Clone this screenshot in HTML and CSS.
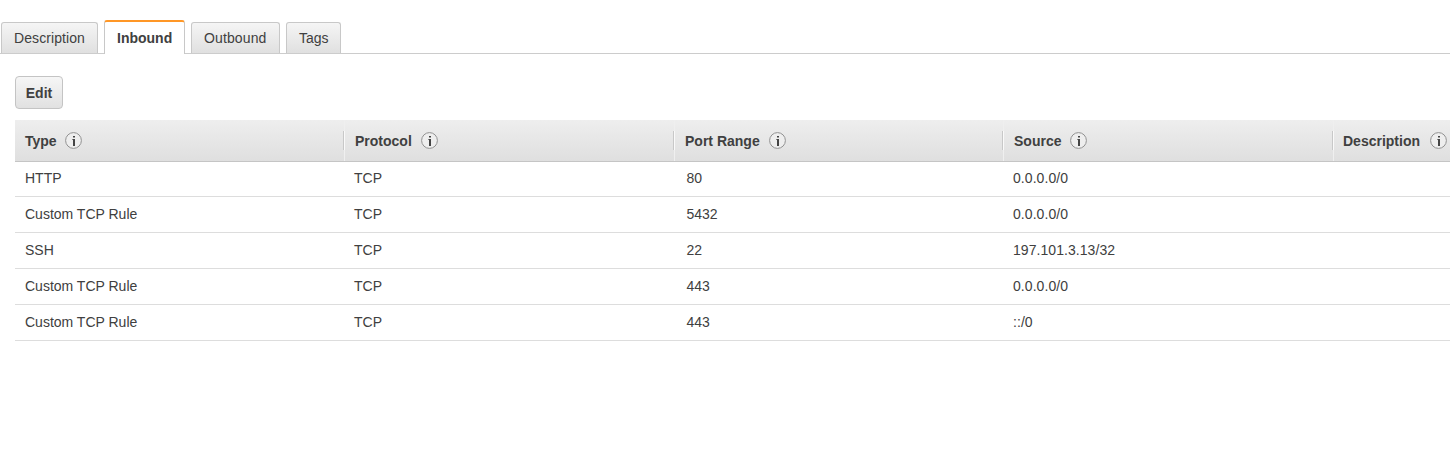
FILE: index.html
```html
<!DOCTYPE html>
<html lang="en">
<head>
<meta charset="utf-8">
<title>Security group rules</title>
<link rel="stylesheet" href="styles.css">
</head>
<body>
<nav class="tabs">
  <a class="tab tab-description">Description</a>
  <a class="tab tab-inbound active">Inbound</a>
  <a class="tab tab-outbound">Outbound</a>
  <a class="tab tab-tags">Tags</a>
</nav>
<main class="panel">
  <button class="edit" type="button">Edit</button>
  <div class="table">
    <div class="row head">
      <div class="cell"><span>Type</span><svg class="info" viewBox="0 0 17 17"><circle cx="8.5" cy="8.5" r="7.9"/><path d="M8 4h2v1.6H8zM7.4 7H10v7H8V8h-.6z"/></svg></div>
      <div class="cell"><span>Protocol</span><svg class="info" viewBox="0 0 17 17"><circle cx="8.5" cy="8.5" r="7.9"/><path d="M8 4h2v1.6H8zM7.4 7H10v7H8V8h-.6z"/></svg></div>
      <div class="cell"><span>Port Range</span><svg class="info" viewBox="0 0 17 17"><circle cx="8.5" cy="8.5" r="7.9"/><path d="M8 4h2v1.6H8zM7.4 7H10v7H8V8h-.6z"/></svg></div>
      <div class="cell"><span>Source</span><svg class="info" viewBox="0 0 17 17"><circle cx="8.5" cy="8.5" r="7.9"/><path d="M8 4h2v1.6H8zM7.4 7H10v7H8V8h-.6z"/></svg></div>
      <div class="cell last"><span>Description</span><svg class="info" viewBox="0 0 17 17"><circle cx="8.5" cy="8.5" r="7.9"/><path d="M8 4h2v1.6H8zM7.4 7H10v7H8V8h-.6z"/></svg></div>
    </div>
    <div class="row"><div class="cell">HTTP</div><div class="cell">TCP</div><div class="cell port">80</div><div class="cell source">0.0.0.0/0</div><div class="cell"></div></div>
    <div class="row"><div class="cell">Custom TCP Rule</div><div class="cell">TCP</div><div class="cell port">5432</div><div class="cell source">0.0.0.0/0</div><div class="cell"></div></div>
    <div class="row"><div class="cell">SSH</div><div class="cell">TCP</div><div class="cell port">22</div><div class="cell source">197.101.3.13/32</div><div class="cell"></div></div>
    <div class="row"><div class="cell">Custom TCP Rule</div><div class="cell">TCP</div><div class="cell port">443</div><div class="cell source">0.0.0.0/0</div><div class="cell"></div></div>
    <div class="row"><div class="cell">Custom TCP Rule</div><div class="cell">TCP</div><div class="cell port">443</div><div class="cell source">::/0</div><div class="cell"></div></div>
  </div>
</main>
</body>
</html>
```
FILE: styles.css
```css
* { box-sizing: border-box; }
body {
  margin: 0;
  height: 450px;
  overflow: hidden;
  background: #fff;
  color: #404040;
  font: 14px/18px "Liberation Sans", Arial, sans-serif;
}
.tabs {
  display: flex;
  align-items: flex-end;
  gap: 6px;
  height: 54px;
  padding-left: 1px;
  border-bottom: 1px solid #ccc;
}
.tab {
  height: 31px;
  padding: 6px 0 0 12px;
  border: 1px solid #c8c8c8;
  border-bottom: 0;
  border-radius: 3px 3px 0 0;
  background: linear-gradient(#f5f5f5, #e0e0e0);
  white-space: nowrap;
}
.tab-description { width: 97px; letter-spacing: 0.08px; }
.tab-inbound { width: 81px; }
.tab-outbound { width: 89px; letter-spacing: 0.12px; }
.tab-tags { width: 55px; }
.tab.active {
  height: 34px;
  margin-bottom: -1px;
  border-top: 2px solid #ff9726;
  background: #fff;
  font-weight: bold;
  padding-top: 7px;
}
.panel { padding: 22px 0 0 15px; }
.edit {
  display: block;
  width: 48px;
  height: 33px;
  padding: 0;
  border: 1px solid #c4c4c4;
  border-radius: 4px;
  background: linear-gradient(#f6f6f6, #e1e1e1);
  color: #404040;
  font: bold 14px/18px "Liberation Sans", Arial, sans-serif;
}
.table { margin-top: 11px; }
.row {
  display: grid;
  grid-template-columns: 329px 330px 329px 330px 117px;
  height: 36px;
  border-bottom: 1px solid #ddd;
}
.cell {
  padding: 8px 0 0 10px;
  white-space: nowrap;
}
.row .port { padding-left: 12.5px; }
.source { letter-spacing: 0.06px; }
.head {
  height: 42px;
  border-bottom-color: #c5c5c5;
  background: linear-gradient(#eee, #dfdfdf);
  font-weight: bold;
}
.head + .row { height: 35px; }
.head + .row .cell { padding-top: 7px; }
.head .cell {
  position: relative;
  display: flex;
  align-items: center;
  gap: 9px;
  padding: 0 0 0 10px;
}
.head .cell:first-child { gap: 8px; }
.head .cell + .cell { border-left: 1px solid #efefef; }
.head .cell.last { padding-left: 9px; gap: 10px; }
.head .cell + .cell::before {
  content: "";
  position: absolute;
  left: -2px;
  top: 11px;
  width: 2px;
  height: 19px;
  background: linear-gradient(90deg, #c8c8c8 50%, #fafafa 50%);
}
.info { flex: none; width: 17px; height: 17px; }
.info circle { fill: #eee; stroke: #929292; stroke-width: 1; }
.info path { fill: #444; }
```
